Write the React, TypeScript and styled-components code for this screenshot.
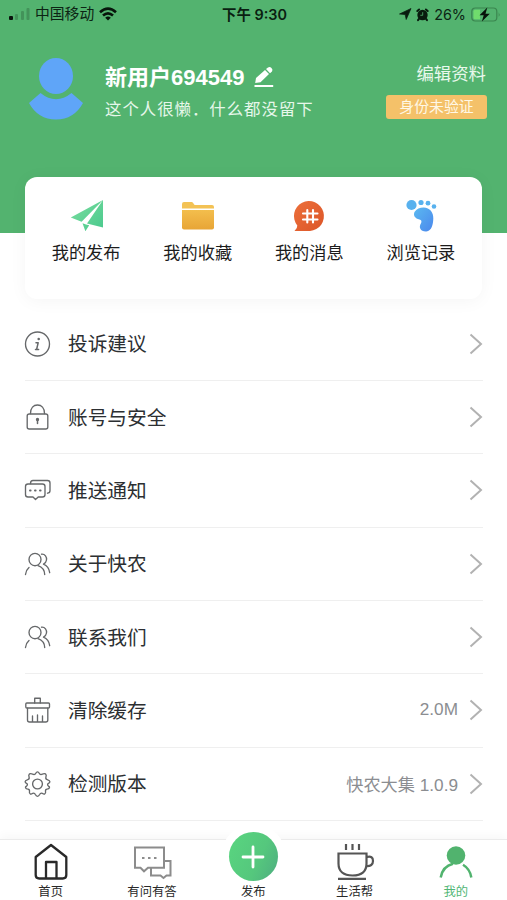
import React from 'react';
import styled, { createGlobalStyle } from 'styled-components';

const GlobalStyle = createGlobalStyle`
  * { box-sizing: border-box; }
  html, body { margin: 0; padding: 0; }
  body { font-family: "Liberation Sans", "Noto Sans CJK SC", sans-serif; background: #fff; overflow: hidden; }
  svg { display: block; flex: none; overflow: visible; }
`;

const Screen = styled.div`
  width: 507px;
  height: 900px;
  display: flex;
  flex-direction: column;
  background: #fff;
  overflow: hidden;
`;

const Header = styled.header`
  height: 233px;
  flex: none;
  background: #53b36f;
`;

const StatusBar = styled.div`
  display: grid;
  grid-template-columns: 1fr auto 1fr;
  align-items: center;
  height: 27px;
  padding: 0 6px 0 8px;
  color: #0c2414;
  font-family: Inter, "Noto Sans CJK SC", sans-serif;
  line-height: 27px;
  white-space: nowrap;
`;

const StatusGroup = styled.div<{ $end?: boolean }>`
  display: flex;
  align-items: center;
  gap: 5px;
  justify-content: ${p => (p.$end ? 'flex-end' : 'flex-start')};
  font-size: ${p => (p.$end ? 14.4 : 14.8)}px;
`;

const StatusText = styled.span`
  padding-top: 1px;
`;

const Clock = styled.div`
  font-size: 14.4px;
  font-weight: 600;
  color: #0a1f11;
`;

const Profile = styled.div`
  display: flex;
  padding: 30px 20px 0 29px;
  color: #fff;
`;

const Identity = styled.div`
  flex: 1;
  padding: 2px 0 0 22px;
`;

const NameLine = styled.div`
  display: flex;
  align-items: center;
  gap: 10px;
  height: 34px;
  padding-bottom: 3px;
  font-size: 22px;
  font-weight: 700;

  svg { margin-top: 4px; }
`;

const Bio = styled.div`
  height: 32px;
  line-height: 32px;
  font-size: 16.4px;
  letter-spacing: 1px;
  color: #e6f7ea;
`;

const ProfileActions = styled.div`
  display: flex;
  flex-direction: column;
  align-items: flex-end;
  padding-top: 3px;
`;

const EditLink = styled.div`
  height: 28px;
  line-height: 28px;
  margin-right: 1px;
  font-size: 17.4px;
  color: #e8f8ec;
`;

const Badge = styled.div`
  width: 101px;
  height: 24px;
  margin-top: 7px;
  border-radius: 3px;
  background: #f4c169;
  color: #fff8e6;
  font-size: 14.9px;
  line-height: 24px;
  text-align: center;
`;

const Shortcuts = styled.section`
  display: grid;
  grid-template-columns: repeat(4, 111.6px);
  justify-content: center;
  flex: none;
  width: 457px;
  height: 122px;
  margin: -56px 0 0 25px;
  padding-top: 22px;
  border-radius: 12px;
  background: #fff;
  box-shadow: 0 2px 18px rgba(0, 0, 0, 0.045);
`;

const Shortcut = styled.div`
  display: flex;
  flex-direction: column;
  align-items: center;
  gap: 7px;
  font-size: 17.2px;
  line-height: 26px;
  color: #1c1c1c;
`;

const List = styled.main`
  flex: none;
  margin: 8.6px 24px 0 25px;
`;

const Row = styled.div`
  display: flex;
  align-items: center;
  height: 73.33px;
  border-bottom: 1.5px solid #efefef;
`;

const RowLabel = styled.div`
  flex: 1;
  margin-left: 17px;
  padding-top: 1px;
  font-size: 19.7px;
  line-height: 30px;
  color: #2c2f32;
`;

const RowValue = styled.div`
  margin-right: 11px;
  padding-bottom: 1px;
  font-size: 17.2px;
  color: #8b8d91;
`;

const TabBar = styled.nav`
  display: grid;
  grid-template-columns: repeat(5, 101.3px);
  grid-template-rows: 60px;
  flex: none;
  height: 61px;
  margin-top: auto;
  border-top: 1px solid #ebebeb;
  background: #fff;
  box-shadow: 0 -3px 10px rgba(0, 0, 0, 0.035);
  position: relative;
`;

const Tab = styled.div<{ $active?: boolean }>`
  display: flex;
  flex-direction: column;
  align-items: center;
  justify-content: flex-end;
  gap: 4px;
  min-height: 0;
  font-size: 12.3px;
  line-height: 16px;
  color: ${p => (p.$active ? '#51b675' : '#292929')};
`;

const PublishButton = styled.div`
  display: flex;
  align-items: center;
  justify-content: center;
  flex: none;
  width: 65px;
  height: 65px;
  margin-bottom: -9px;
  border-radius: 50%;
  background: #fff;
`;

const PublishDisc = styled.div`
  display: flex;
  align-items: center;
  justify-content: center;
  width: 49px;
  height: 49px;
  border-radius: 50%;
  background: linear-gradient(115deg, #58d27f 15%, #55c77d 60%, #4dac80 100%);
`;

const TabLabel = styled.span`
  z-index: 1;
`;

const Signal = () => (
  <svg width="22" height="14" viewBox="0 0 22 14">
    <rect x="1" y="9" width="4" height="4" rx="1" fill="#09130c" />
    <g fill="#43935a">
      <rect x="7" y="7" width="3" height="6" rx="1" />
      <rect x="13" y="4" width="3" height="9" rx="1" />
      <rect x="18.5" y="1" width="3" height="12" rx="1" />
    </g>
  </svg>
);

const Wifi = () => (
  <svg width="18" height="14" viewBox="0 0 18 14" fill="none" stroke="#07150b" strokeWidth="2.6">
    <path d="M1 5.2Q9-2 17 5.2M4 8.5q5-4.4 10 0" />
    <path d="M6.2 10.7q2.8-2.3 5.6 0L9 13.5z" fill="#07150b" stroke="none" />
  </svg>
);

const LocationArrow = () => (
  <svg width="12" height="12" viewBox="0 0 12 12"><path d="M12 .5 7.2 11.5 6.2 6.6.5 6z" fill="#081b0e" stroke="#081b0e" strokeWidth=".7" strokeLinejoin="round" /></svg>
);

const Alarm = () => (
  <svg width="13" height="13" viewBox="0 0 13 13">
    <circle cx="6.5" cy="7" r="5.2" fill="#081b0e" />
    <path d="m1.3 3 1.8-1.5M11.7 3 9.9 1.5M3 10.8l-1 1.4M10 10.8l1 1.4" stroke="#081b0e" strokeWidth="2" strokeLinecap="round" />
    <path d="M6.7 4.2v3.1H4.3" stroke="#53b36f" fill="none" strokeWidth=".8" />
  </svg>
);

const Battery = () => (
  <svg width="30" height="15" viewBox="0 0 30 15">
    <rect x=".8" y="1" width="25" height="13" rx="3.5" fill="none" stroke="#3b864f" strokeWidth="1.2" />
    <path d="M4 2.8h5v9.4H4a1.5 1.5 0 0 1-1.5-1.5V4.3A1.5 1.5 0 0 1 4 2.8Z" fill="#70dc6d" />
    <path d="M27.7 5.2v4.6q1.8-2.3 0-4.6Z" fill="#3b864f" />
    <path d="M16.3.5 8.5 8.3h4.2l-1.8 6.2L18.8 6.7h-4.3z" fill="#07120a" />
  </svg>
);

const Avatar = () => (
  <svg width="54" height="63" viewBox="0 0 54 63" fill="#5fa5f8">
    <ellipse cx="27" cy="19" rx="17" ry="18" />
    <path d="M11.5 36q15.5 12.5 31 0L54 46Q45 62.5 27 62.5T0 46z" />
  </svg>
);

const Pencil = () => (
  <svg width="20" height="20" viewBox="0 0 20 20" fill="#fff">
    <path d="m1.2 16 .8-5L11 3l4 4-8.5 8.3zM12 2.1l2-1.6q1.8-1.2 3.5.5t.5 3.5l-2 1.7zM.5 18h18.7v2H.5z" />
  </svg>
);

const Plane = () => (
  <svg width="34" height="34" viewBox="0 0 34 34">
    <defs><linearGradient id="plane" x2="1" y2="1"><stop stopColor="#7bdd9f" /><stop offset="1" stopColor="#49c98d" /></linearGradient></defs>
    <path d="M34 1 1.8 18.5l10.8 4.2zM34 1v27.5l-16-4zM13.5 24.2l3.5 1.2 3.2.8-3.8 6.1z" fill="url(#plane)" />
  </svg>
);

const Folder = () => (
  <svg width="34" height="34" viewBox="0 0 34 34">
    <defs><linearGradient id="folder" x2="0" y2="1"><stop stopColor="#f3be4d" /><stop offset="1" stopColor="#e8a536" /></linearGradient></defs>
    <path d="M1 9.500V5q0-2 2-2h7.700q1.300 0 1.800 1.500t2 1.500H31q2 0 2 2v1.500z" fill="#f3c254" />
    <path d="M1 11h32v17.500q0 2-2 2H3q-2 0-2-2z" fill="url(#folder)" />
  </svg>
);

const Message = () => (
  <svg width="34" height="34" viewBox="0 0 34 34">
    <defs><linearGradient id="msg" x2="1" y2="1"><stop stopColor="#ec703b" /><stop offset="1" stopColor="#dc5528" /></linearGradient></defs>
    <path d="M2.500 32q3-2.500 2.800-5.500A15 15 0 1 1 18 32z" fill="url(#msg)" />
    <path d="M15.300 11v12.500M21 11v12.500M11 14.500h14.500M11 20.500h14.500" stroke="#fff" strokeWidth="2.1" strokeLinecap="round" fill="none" />
  </svg>
);

const Foot = () => (
  <svg width="34" height="34" viewBox="0 0 34 34">
    <defs><linearGradient id="foot" x2="1" y2="1"><stop stopColor="#5bb9f0" /><stop offset="1" stopColor="#4b88ed" /></linearGradient></defs>
    <g fill="#58b1ee"><circle cx="7.5" cy="6" r="5.1" /><circle cx="17" cy="3.500" r="2.600" /><circle cx="24" cy="4.200" r="2.400" /><circle cx="30" cy="7.500" r="2.300" /></g>
    <path d="M19.500 8.500C26 8.500 29.500 13.500 29.300 19.500c-.2 6-1.500 12.500-7 13-5.800.3-8-4.300-5.300-8.300 1-1.800.3-3.200-1.500-3.700C11 19.500 9 16.500 10.500 13 12.500 9.800 16 8.500 19.500 8.500Z" fill="url(#foot)" />
  </svg>
);

const Outline = ({ children }: { children: React.ReactNode }) => (
  <svg width="26" height="26" viewBox="0 0 26 26" fill="none" stroke="#66686a" strokeWidth="1.35" strokeLinecap="round" strokeLinejoin="round">{children}</svg>
);

const Info = () => (
  <Outline>
    <circle cx="12.5" cy="13" r="12" />
    <path d="M11 11.700h2.200l-1.600 6.800h2M10.500 18.500h1" strokeWidth="1.5" />
    <circle cx="13.7" cy="8" r=".6" fill="#66686a" />
  </Outline>
);

const Lock = () => (
  <Outline>
    <rect x="2.2" y="10" width="20.6" height="15" rx="2" />
    <path d="M5.500 9.500C5.500 4 8.500 1 12.500 1s7 3 7 8.500" />
    <path d="M12.500 16v3.500" strokeWidth="1.5" /><circle cx="12.5" cy="15.5" r="1" fill="#66686a" />
  </Outline>
);

const Chat = () => (
  <Outline>
    <path d="M3 7h14.500q2.500 0 2.500 2.500v8q0 2.500-2.500 2.500h-4.300L10.500 22.500 8 20H3Q.5 20 .5 17.500v-8Q.5 7 3 7Z" />
    <path d="M5.500 6.500Q5.500 3.500 8 3.500h14.500q2.500 0 2.500 2.500v7.500q0 2.500-2.500 2.700" />
    <path d="M5 13.500h.6M10 13.500h.6M15 13.500h.6" strokeWidth="2" />
  </Outline>
);

const People = () => (
  <Outline>
    <ellipse cx="10" cy="8.5" rx="6" ry="6.2" />
    <path d="M.5 23.500Q1 19 4 16.500M13 14.700Q19.500 17 19.700 23.500M16.500 3.200C20 2.800 22 6 21.500 9c-.3 2-1.300 3.300-3 4.200 3.800 1.600 5.700 4.600 6.200 8.500" />
  </Outline>
);

const Bin = () => (
  <Outline>
    <rect x=".8" y="6" width="23.7" height="5" rx="1" />
    <path d="M9.700 6V1.200h5.600V6M2.500 11.200V23q0 2 2 2h16.300q2 0 2-2V11.200M7.500 19v5.500M12.500 18v6.500M17.500 19v5.500" />
  </Outline>
);

const Gear = () => (
  <Outline>
    <circle cx="12.5" cy="13" r="4.9" />
    <path d="M12.500.8q1 0 1.700 1.400.8 1.700 2.500 1.200 3.500-1.500 4.300.2.500.9-.1 2.500-.5 2 1.300 2.500 2.700 1 2.700 2.200 0 1-1.700 1.800-1.200 1.200 0 2.200 1.700 1 1.300 2-.5 1.200-2.400 1.300-1.800.2-1.600 2 .5 2.200-.8 2.900-1 .4-2.500-.7-1.600-.7-2.400 1-1 2-2.300 2t-2.300-2q-.8-1.700-2.400-1Q6.300 23.400 5.300 23 4 22.300 4.500 20.100q.2-1.800-1.600-2Q1 18 .5 16.800q-.4-1 1.300-2 1.200-1 0-2.200Q.1 11.800.1 10.800q0-1.200 2.700-2.200 1.800-.5 1.300-2.500-.6-1.600-.1-2.500.8-1.700 4.300-.2 1.700.5 2.500-1.200Q11.500.8 12.500.8Z" />
  </Outline>
);

const Chevron = () => (
  <svg width="14" height="22" viewBox="0 0 14 22" fill="none" stroke="#b2b2b2" strokeWidth="2"><path d="m1.500 1.500 10.500 9.500L1.500 20.500" /></svg>
);

const HomeIcon = () => (
  <svg width="34" height="37" viewBox="0 0 34 37" fill="none" stroke="#292929" strokeWidth="2.3" strokeLinejoin="round">
    <path d="M1.700 14 17 2l15.300 12v18q0 3.500-3.500 3.500H5.200Q1.700 35.500 1.700 32z" /><path d="M12 35V19h10.500v16" />
  </svg>
);

const AskIcon = () => (
  <svg width="39" height="37" viewBox="0 0 39 37" fill="none" stroke="#8c8c8c" strokeWidth="2">
    <path d="M3 4.500h29v20.300H16l-4 3.500-3.500-3.500H3zM32 18h6.500v14.500h-4l-3 2.500-3-2.500H19v-7" /><path d="M10 15h2.500M16 15h2.500M22 15h2.500" />
  </svg>
);

const CupIcon = () => (
  <svg width="38" height="37" viewBox="0 0 38 37" fill="none" stroke="#555" strokeWidth="2.2">
    <path d="M2.500 10.500h28v10c0 8-5 12-14 12s-14-4-14-12zM31 14q6-1.500 6 4t-7 5M2 35.800h28M10 1v6M16.500 1v6M23 1v6" />
  </svg>
);

const MeIcon = () => (
  <svg width="34" height="37" viewBox="0 0 34 37">
    <circle cx="17" cy="12.5" r="9.3" fill="#51b36e" />
    <path d="M1.700 34.500C3 27 7 22.500 14 20.800M24 21.800Q31 26 32.300 34.500" fill="none" stroke="#51b36e" strokeWidth="2.5" />
  </svg>
);

const PlusIcon = () => (
  <svg width="22" height="22" viewBox="0 0 22 22"><path d="M11 1v20M1 11h20" stroke="#fff" strokeWidth="2.8" strokeLinecap="round" /></svg>
);

const shortcuts = [
  { icon: <Plane />, label: '我的发布' },
  { icon: <Folder />, label: '我的收藏' },
  { icon: <Message />, label: '我的消息' },
  { icon: <Foot />, label: '浏览记录' },
];

const rows = [
  { icon: <Info />, label: '投诉建议' },
  { icon: <Lock />, label: '账号与安全' },
  { icon: <Chat />, label: '推送通知' },
  { icon: <People />, label: '关于快农' },
  { icon: <People />, label: '联系我们' },
  { icon: <Bin />, label: '清除缓存', value: '2.0M' },
  { icon: <Gear />, label: '检测版本', value: '快农大集 1.0.9' },
];

export default function App() {
  return (
    <Screen>
      <GlobalStyle />
      <Header>
        <StatusBar>
          <StatusGroup><Signal /><StatusText>中国移动</StatusText><Wifi /></StatusGroup>
          <Clock>下午 9:30</Clock>
          <StatusGroup $end><LocationArrow /><Alarm /><StatusText>26%</StatusText><Battery /></StatusGroup>
        </StatusBar>
        <Profile>
          <Avatar />
          <Identity>
            <NameLine>新用户694549<Pencil /></NameLine>
            <Bio>这个人很懒．什么都没留下</Bio>
          </Identity>
          <ProfileActions>
            <EditLink>编辑资料</EditLink>
            <Badge>身份未验证</Badge>
          </ProfileActions>
        </Profile>
      </Header>
      <Shortcuts>
        {shortcuts.map(s => <Shortcut key={s.label}>{s.icon}<span>{s.label}</span></Shortcut>)}
      </Shortcuts>
      <List>
        {rows.map(r => (
          <Row key={r.label}>
            {r.icon}
            <RowLabel>{r.label}</RowLabel>
            {r.value && <RowValue>{r.value}</RowValue>}
            <Chevron />
          </Row>
        ))}
      </List>
      <TabBar>
        <Tab><HomeIcon /><TabLabel>首页</TabLabel></Tab>
        <Tab><AskIcon /><TabLabel>有问有答</TabLabel></Tab>
        <Tab><PublishButton><PublishDisc><PlusIcon /></PublishDisc></PublishButton><TabLabel>发布</TabLabel></Tab>
        <Tab><CupIcon /><TabLabel>生活帮</TabLabel></Tab>
        <Tab $active><MeIcon /><TabLabel>我的</TabLabel></Tab>
      </TabBar>
    </Screen>
  );
}
